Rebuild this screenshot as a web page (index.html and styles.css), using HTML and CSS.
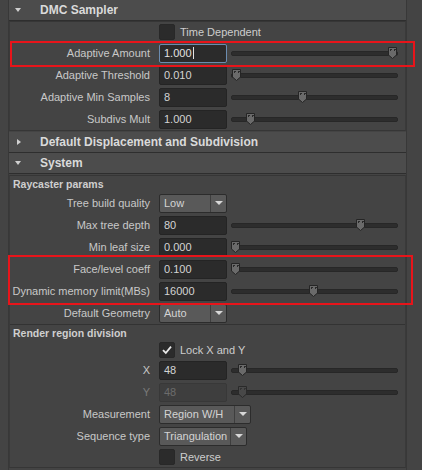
FILE: index.html
```html
<!DOCTYPE html>
<html>
<head>
<meta charset="utf-8">
<link rel="stylesheet" href="styles.css">
</head>
<body>
<div class="panel">
  <div class="hdr"><span class="tri-down"></span><span class="hdr-title">DMC Sampler</span></div>
  <div class="frame">
    <div class="row row-top"><span class="lbl"></span><span class="cb"></span><span class="cb-text">Time Dependent</span></div>
    <div class="row"><span class="lbl">Adaptive Amount</span><span class="field active">1.000<span class="caret"></span></span>
      <div class="slider"><div class="track"></div><svg class="thumb" style="left:156px" width="11" height="14" viewBox="0 0 11 14"><path d="M1.5 1.5h8v7.5l-4 3.5l-4-3.5z" fill="#6a6a6a" stroke="#252525"/><rect x="3" y="3" width="1" height="2" fill="#2a2a2a"/><rect x="7" y="3" width="1" height="2" fill="#2a2a2a"/><rect x="3" y="3" width="2" height="1" fill="#2a2a2a"/><rect x="7" y="3" width="2" height="1" fill="#2a2a2a"/></svg></div></div>
    <div class="row"><span class="lbl">Adaptive Threshold</span><span class="field">0.010</span>
      <div class="slider"><div class="track"></div><svg class="thumb" style="left:0px" width="11" height="14" viewBox="0 0 11 14"><path d="M1.5 1.5h8v7.5l-4 3.5l-4-3.5z" fill="#6a6a6a" stroke="#252525"/><rect x="3" y="3" width="2" height="1" fill="#2a2a2a"/><rect x="3" y="3" width="1" height="2" fill="#2a2a2a"/><rect x="7" y="3" width="2" height="1" fill="#2a2a2a"/><rect x="7" y="3" width="1" height="2" fill="#2a2a2a"/></svg></div></div>
    <div class="row"><span class="lbl">Adaptive Min Samples</span><span class="field">8</span>
      <div class="slider"><div class="track"></div><svg class="thumb" style="left:66px" width="11" height="14" viewBox="0 0 11 14"><path d="M1.5 1.5h8v7.5l-4 3.5l-4-3.5z" fill="#6a6a6a" stroke="#252525"/><rect x="3" y="3" width="2" height="1" fill="#2a2a2a"/><rect x="3" y="3" width="1" height="2" fill="#2a2a2a"/><rect x="7" y="3" width="2" height="1" fill="#2a2a2a"/><rect x="7" y="3" width="1" height="2" fill="#2a2a2a"/></svg></div></div>
    <div class="row"><span class="lbl">Subdivs Mult</span><span class="field">1.000</span>
      <div class="slider"><div class="track"></div><svg class="thumb" style="left:14px" width="11" height="14" viewBox="0 0 11 14"><path d="M1.5 1.5h8v7.5l-4 3.5l-4-3.5z" fill="#6a6a6a" stroke="#252525"/><rect x="3" y="3" width="2" height="1" fill="#2a2a2a"/><rect x="3" y="3" width="1" height="2" fill="#2a2a2a"/><rect x="7" y="3" width="2" height="1" fill="#2a2a2a"/><rect x="7" y="3" width="1" height="2" fill="#2a2a2a"/></svg></div></div>
  </div>
  <div class="hdr hdr-gap"><span class="tri-right"></span><span class="hdr-title">Default Displacement and Subdivision</span></div>
  <div class="hdr"><span class="tri-down"></span><span class="hdr-title">System</span></div>
  <div class="frame frame-gap">
    <div class="sub-title">Raycaster params</div>
    <div class="row"><span class="lbl">Tree build quality</span><span class="dd w68"><span class="dd-text">Low</span><span class="dd-arrow"></span></span></div>
    <div class="row"><span class="lbl">Max tree depth</span><span class="field">80</span>
      <div class="slider"><div class="track"></div><svg class="thumb" style="left:124px" width="11" height="14" viewBox="0 0 11 14"><path d="M1.5 1.5h8v7.5l-4 3.5l-4-3.5z" fill="#6a6a6a" stroke="#252525"/><rect x="3" y="3" width="2" height="1" fill="#2a2a2a"/><rect x="3" y="3" width="1" height="2" fill="#2a2a2a"/><rect x="7" y="3" width="2" height="1" fill="#2a2a2a"/><rect x="7" y="3" width="1" height="2" fill="#2a2a2a"/></svg></div></div>
    <div class="row"><span class="lbl">Min leaf size</span><span class="field">0.000</span>
      <div class="slider"><div class="track"></div><svg class="thumb" style="left:-1px" width="11" height="14" viewBox="0 0 11 14"><path d="M1.5 1.5h8v7.5l-4 3.5l-4-3.5z" fill="#6a6a6a" stroke="#252525"/><rect x="3" y="3" width="2" height="1" fill="#2a2a2a"/><rect x="3" y="3" width="1" height="2" fill="#2a2a2a"/><rect x="7" y="3" width="2" height="1" fill="#2a2a2a"/><rect x="7" y="3" width="1" height="2" fill="#2a2a2a"/></svg></div></div>
    <div class="row"><span class="lbl">Face/level coeff</span><span class="field">0.100</span>
      <div class="slider"><div class="track"></div><svg class="thumb" style="left:-1px" width="11" height="14" viewBox="0 0 11 14"><path d="M1.5 1.5h8v7.5l-4 3.5l-4-3.5z" fill="#6a6a6a" stroke="#252525"/><rect x="3" y="3" width="2" height="1" fill="#2a2a2a"/><rect x="3" y="3" width="1" height="2" fill="#2a2a2a"/><rect x="7" y="3" width="2" height="1" fill="#2a2a2a"/><rect x="7" y="3" width="1" height="2" fill="#2a2a2a"/></svg></div></div>
    <div class="row"><span class="lbl">Dynamic memory limit(MBs)</span><span class="field">16000</span>
      <div class="slider"><div class="track"></div><svg class="thumb" style="left:77px" width="11" height="14" viewBox="0 0 11 14"><path d="M1.5 1.5h8v7.5l-4 3.5l-4-3.5z" fill="#6a6a6a" stroke="#252525"/><rect x="3" y="3" width="2" height="1" fill="#2a2a2a"/><rect x="3" y="3" width="1" height="2" fill="#2a2a2a"/><rect x="7" y="3" width="2" height="1" fill="#2a2a2a"/><rect x="7" y="3" width="1" height="2" fill="#2a2a2a"/></svg></div></div>
    <div class="row"><span class="lbl">Default Geometry</span><span class="dd w68"><span class="dd-text">Auto</span><span class="dd-arrow"></span></span></div>
    <div class="sub-sep">
      <div class="sub-title sub-title2">Render region division</div>
      <div class="row row-lock"><span class="lbl"></span><span class="cb checked"><svg width="14" height="14" viewBox="0 0 14 14"><path d="M3 7.2l2.8 2.8l5.2-6.4" fill="none" stroke="#e8e8e8" stroke-width="1.8"/></svg></span><span class="cb-text">Lock X and Y</span></div>
      <div class="row"><span class="lbl">X</span><span class="field">48</span>
        <div class="slider"><div class="track"></div><svg class="thumb" style="left:6px" width="11" height="14" viewBox="0 0 11 14"><path d="M1.5 1.5h8v7.5l-4 3.5l-4-3.5z" fill="#6a6a6a" stroke="#252525"/><rect x="3" y="3" width="2" height="1" fill="#2a2a2a"/><rect x="3" y="3" width="1" height="2" fill="#2a2a2a"/><rect x="7" y="3" width="2" height="1" fill="#2a2a2a"/><rect x="7" y="3" width="1" height="2" fill="#2a2a2a"/></svg></div></div>
      <div class="row disabled"><span class="lbl">Y</span><span class="field">48</span>
        <div class="slider"><div class="track"></div><svg class="thumb" style="left:6px" width="11" height="14" viewBox="0 0 11 14"><path d="M1.5 1.5h8v7.5l-4 3.5l-4-3.5z" fill="#484848" stroke="#2a2a2a"/><rect x="3" y="3" width="2" height="1" fill="#333"/><rect x="3" y="3" width="1" height="2" fill="#333"/><rect x="7" y="3" width="2" height="1" fill="#333"/><rect x="7" y="3" width="1" height="2" fill="#333"/></svg></div></div>
      <div class="row"><span class="lbl">Measurement</span><span class="dd w92"><span class="dd-text">Region W/H</span><span class="dd-arrow"></span></span></div>
      <div class="row"><span class="lbl">Sequence type</span><span class="dd w88"><span class="dd-text">Triangulation</span><span class="dd-arrow"></span></span></div>
      <div class="row row-last"><span class="lbl"></span><span class="cb"></span><span class="cb-text">Reverse</span></div>
    </div>
  </div>
</div>
<div class="mark mark1"></div>
<div class="mark mark2"></div>
</body>
</html>
```
FILE: styles.css
```css
html, body {
  margin: 0;
  padding: 0;
}
body {
  background: #444444;
  font-family: "Liberation Sans", Arial, sans-serif;
  font-size: 11px;
  color: #c8c8c8;
  width: 422px;
  height: 470px;
  overflow: hidden;
  position: relative;
}
.panel {
  margin-left: 8px;
  width: 397px;
  border-left: 1px solid #383838;
  border-right: 1px solid #383838;
  min-height: 470px;
}
.hdr {
  height: 20px;
  background: #4c4c4c;
  border-bottom: 1px solid #2e2e2e;
  display: flex;
  align-items: center;
  position: relative;
}
.hdr-gap {
  margin-top: 1px;
  border-top: 0;
}
.hdr-title {
  font-weight: bold;
  font-size: 12px;
  color: #dadada;
  margin-left: 0;
  position: absolute;
  left: 31px;
  top: 3px;
}
.tri-down {
  width: 0;
  height: 0;
  border-left: 3.5px solid transparent;
  border-right: 3.5px solid transparent;
  border-top: 4px solid #d0d0d0;
  margin-left: 6px;
  margin-top: -1px;
}
.tri-right {
  width: 0;
  height: 0;
  border-top: 3.5px solid transparent;
  border-bottom: 3.5px solid transparent;
  border-left: 4px solid #d0d0d0;
  margin-left: 8px;
}
.frame {
  border-top: 1px solid #363636;
  border-bottom: 1px solid #363636;
  border-left: 1px solid #3a3a3a;
  border-right: 1px solid #3a3a3a;
  background: #444444;
}
.frame-gap {
  margin-top: 1px;
}
.row {
  display: flex;
  align-items: center;
  height: 22px;
}
.row-top {
  height: 20px;
}
.row-lock {
  height: 18px;
}
.row-last {
  height: 20px;
}
.lbl {
  width: 140px;
  text-align: right;
  margin-right: 9px;
  flex-shrink: 0;
  white-space: nowrap;
}
.field {
  width: 68px;
  height: 19px;
  box-sizing: border-box;
  background: #2b2b2b;
  border: 1px solid #242424;
  border-radius: 2px;
  padding-left: 4px;
  line-height: 17px;
  color: #d4d4d4;
  flex-shrink: 0;
  display: flex;
  align-items: center;
}
.field.active {
  border-color: #6b8cb0;
  color: #e2e2e2;
}
.caret {
  width: 1px;
  height: 12px;
  background: #e2e2e2;
  margin-left: 1px;
}
.slider {
  position: relative;
  width: 167px;
  height: 14px;
  margin-left: 4px;
  display: flex;
  align-items: center;
}
.track {
  flex: 1;
  height: 3px;
  background: #2d2d2d;
  border: 1px solid #272727;
  border-radius: 2px;
}
.thumb {
  position: absolute;
  top: 0;
}
.cb {
  width: 16px;
  height: 16px;
  box-sizing: border-box;
  background: #2b2b2b;
  border: 1px solid #282828;
  border-radius: 2px;
  flex-shrink: 0;
  display: flex;
  align-items: center;
  justify-content: center;
}
.cb-text {
  margin-left: 5px;
  color: #cdcdcd;
}
.dd {
  height: 19px;
  box-sizing: border-box;
  background: #595959;
  border: 1px solid #2c2c2c;
  border-radius: 2px;
  display: flex;
  flex-shrink: 0;
}
.w68 { width: 68px; }
.w92 { width: 92px; }
.w88 { width: 88px; }
.dd-text {
  flex: 1;
  padding-left: 4px;
  line-height: 17px;
  color: #d4d4d4;
  white-space: nowrap;
  overflow: hidden;
}
.dd-arrow {
  width: 15px;
  border-left: 1px solid #3e3e3e;
  display: flex;
  align-items: center;
  justify-content: center;
}
.dd-arrow::after {
  content: "";
  width: 0;
  height: 0;
  border-left: 4px solid transparent;
  border-right: 4px solid transparent;
  border-top: 4px solid #d8d8d8;
}
.sub-title {
  height: 16px;
  line-height: 16px;
  font-weight: bold;
  font-size: 10.5px;
  padding-left: 3px;
  color: #cfcfcf;
}
.sub-title2 {
  height: 15px;
  line-height: 15px;
  padding-top: 1px;
}
.sub-sep {
  border-top: 1px solid #333333;
}
.disabled .lbl { color: #7a7a7a; }
.disabled .field {
  background: #3e3e3e;
  border-color: #383838;
  color: #6c6c6c;
}
.mark {
  position: absolute;
  border: 2px solid #e8141a;
  box-sizing: border-box;
}
.mark1 {
  left: 10px;
  top: 41px;
  width: 405px;
  height: 26px;
}
.mark2 {
  left: 8px;
  top: 255px;
  width: 405px;
  height: 50px;
}
```
